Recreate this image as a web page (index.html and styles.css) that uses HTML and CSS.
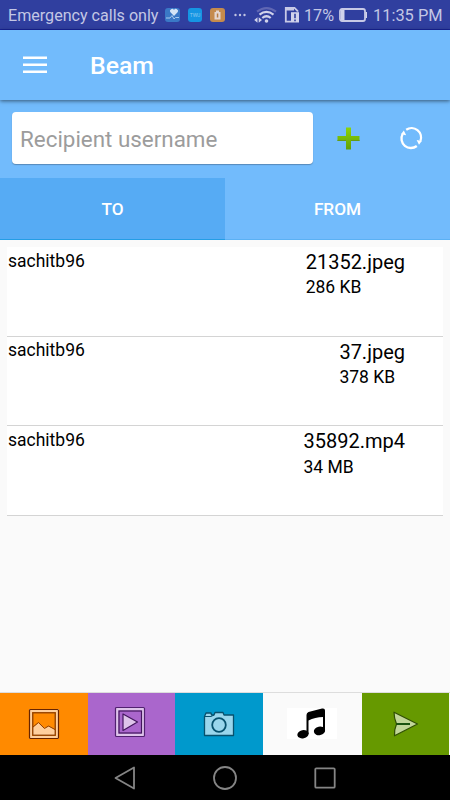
FILE: index.html
```html
<!DOCTYPE html>
<html lang="en">
<head>
<meta charset="utf-8">
<title>Beam</title>
<link rel="stylesheet" href="styles.css">
</head>
<body>
<div class="status">
  <span class="carrier">Emergency calls only</span>
  <svg class="notices" width="140" height="30" viewBox="160 0 140 30">
    <rect x="165" y="8" width="15" height="14" rx="3" fill="#3a78c6"/>
    <path d="M174 16l-3.800-3.900a2 2 0 0 1 3.800-2 2 2 0 0 1 3.800 2z" fill="#d5e5f6"/>
    <path d="M166 18h4l2-2.500 2 3.500 1.500-1.500H179" fill="none" stroke="#a6c8ed"/>
    <rect x="188" y="8" width="14" height="14" rx="3" fill="#1595e3"/>
    <text x="195" y="17" class="app-label">TWU</text>
    <rect x="210" y="8" width="15" height="14" rx="3" fill="#c58b4d"/>
    <path d="M214.500 12h6v7.500h-6zM216 10.500h3V12h-3z" fill="#e5d6cf"/>
    <path d="M216.800 13.500h1.500v4h-1.500z" fill="#b77b40"/>
    <g fill="#c1c4e2"><circle cx="235.500" cy="15" r="1.200"/><circle cx="240" cy="15" r="1.200"/><circle cx="244.500" cy="15" r="1.200"/></g>
    <g fill="none" stroke-width="2.200">
      <path d="M257 11.700q9.500-7.200 19 0" stroke="#6067b3"/>
      <path d="M259.500 14.700q7-5.500 14 0M262.300 18q4.200-3.500 8.400 0" stroke="#d0d2eb"/>
    </g>
    <circle cx="266.500" cy="21" r="1.800" fill="#d0d2eb"/>
    <path d="M254.200 20l3.300-2.700v5.400zM262 20l-3.300-2.700v5.400z" fill="#d0d2eb"/>
    <path d="M291 21.700h-5.200V7.800h8.700l3 3v1M286 9.500h8" fill="none" stroke="#c7c9e6" stroke-width="1.800"/>
    <path d="M291 12.200h8v10.300h-8z" fill="#d0d2eb"/>
    <path d="M294.200 13.800h1.600v4.400h-1.600zM294.200 19.500h1.600v1.700h-1.600z" fill="#303f9f"/>
  </svg>
  <span class="percent">17%</span>
  <svg class="battery" width="29" height="14" viewBox="0 0 29 14">
    <rect x="1" y="1" width="25" height="12" rx="2" fill="none" stroke="#c7c9e6" stroke-width="1.800"/>
    <path d="M2 2H5.500v10H2zM26.500 4H28v6h-1.500z" fill="#d0d2eb"/>
  </svg>
  <span class="clock">11:35 PM</span>
</div>
<header class="appbar">
  <svg width="24" height="18" viewBox="0 0 24 18"><path d="M0 1.700h24M0 8.700h24M0 15.700h24" stroke="#fff" stroke-width="2.500"/></svg>
  <h1>Beam</h1>
</header>
<div class="search">
  <input class="recipient" type="text" placeholder="Recipient username">
  <svg class="add" width="23" height="23" viewBox="0 0 23 23">
    <defs><linearGradient id="leaf" x2="0" y2="1"><stop stop-color="#8bd40a"/><stop offset="1" stop-color="#62a006"/></linearGradient></defs>
    <path d="M9 .5h5V9h8.500v5H14v8.500H9V14H.5V9H9z" fill="url(#leaf)"/>
    <path d="M.5 13.500H9M14 13.500h8.500" stroke="#659b16"/>
  </svg>
  <svg class="refresh" width="24" height="24" viewBox="0 0 24 24">
    <g fill="none" stroke="#fff" stroke-width="2.300">
      <path d="M7.200 3.700A9.500 9.500 0 0 1 21.400 15"/>
      <path d="M17.800 20A9.500 9.500 0 0 1 3.600 8"/>
    </g>
    <path d="M17.600 14l5.200 1-2.800 3.800zM7.200 9.200L2 8.200 4.800 4.400z" fill="#fff"/>
  </svg>
</div>
<nav class="tabs"><div class="tab active">TO</div><div class="tab">FROM</div></nav>
<main class="transfers">
  <div class="row"><span class="user">sachitb96</span><div class="file"><div class="name">21352.jpeg</div><div class="size">286 KB</div></div></div>
  <div class="row"><span class="user">sachitb96</span><div class="file"><div class="name">37.jpeg</div><div class="size">378 KB</div></div></div>
  <div class="row"><span class="user">sachitb96</span><div class="file"><div class="name">35892.mp4</div><div class="size">34 MB</div></div></div>
</main>
<footer class="actions">
  <div class="action photo">
    <svg width="32" height="32" viewBox="0 0 32 32">
      <rect x="2.500" y="2.500" width="27" height="27" fill="none" stroke="#ffcf9c" stroke-width="3"/>
      <path d="M5 19.500l5.500-4.500 5.500 5.500 5-2 6 3.500V27H5z" fill="#ffcf9c"/>
      <path d="M5 19l5.500-4.500 6 6 4-2.500L27 21.500" fill="none" stroke="#8b3f08"/>
      <rect x="4.800" y="4.800" width="22.400" height="22.400" fill="none" stroke="#843a05" stroke-width="1.200"/>
      <rect x="1.500" y="1.500" width="29" height="29" rx="1" fill="none" stroke="#682400" stroke-width="1.200"/>
    </svg>
  </div>
  <div class="action video">
    <svg width="32" height="32" viewBox="0 0 32 32">
      <rect x="3" y="3" width="26" height="26" fill="none" stroke="#dec4ea" stroke-width="3"/>
      <rect x="5" y="5" width="22.500" height="22" fill="none" stroke="#43165e" stroke-width="1.200"/>
      <rect x="1.500" y="1.500" width="29" height="29" rx="1" fill="none" stroke="#512170" stroke-width="1.200"/>
      <path d="M9 8v16.500L23.500 16z" fill="#dec4ea" stroke="#43165e" stroke-width="1.200" stroke-linejoin="round"/>
    </svg>
  </div>
  <div class="action camera">
    <svg width="32" height="26" viewBox="0 0 32 26">
      <path d="M1.500 5.500L3 2h5l.5 2H11l1-2.500h8L21 4h9.500v20.500h-29z" fill="#99d6ec" stroke="#07516d" stroke-width="1.300" stroke-linejoin="round"/>
      <path d="M2 5.500h6l3-1.500" fill="none" stroke="#07516d"/>
      <circle cx="16" cy="14" r="6.800" fill="#99d6ec" stroke="#07516d" stroke-width="1.800"/>
    </svg>
  </div>
  <div class="action music">
    <svg width="50" height="31" viewBox="0 0 50 31">
      <path d="M0 0h50v31H0z" fill="#fff"/>
      <path d="M19.500 7Q19.500 4.800 21.500 4L35 .6Q38 0 38 2.500V23h-2V9Q28 9 21.500 12.500v13.500h-2z"/>
      <ellipse cx="16" cy="26.200" rx="5.700" ry="4.100" transform="rotate(-12 16 26.200)"/>
      <ellipse cx="32.500" cy="22.900" rx="5.700" ry="4.300" transform="rotate(-12 32.500 22.900)"/>
    </svg>
  </div>
  <div class="action send">
    <svg width="26" height="26" viewBox="0 0 26 26">
      <path d="M1 1.200L24.500 13 1.500 24.800Q1 19 3.500 13 1 7 1 1.200z" fill="#c2d69a" stroke="#315004" stroke-width="1.200" stroke-linejoin="round"/>
      <path d="M3.500 13H17" stroke="#084500" stroke-width="1.800"/>
    </svg>
  </div>
</footer>
<div class="sysnav">
  <svg width="22" height="24" viewBox="0 0 22 24"><path d="M20 1.500v21L1.500 12z" fill="none" stroke="#858585" stroke-width="1.800" stroke-linejoin="round"/></svg>
  <svg width="24" height="24" viewBox="0 0 24 24"><circle cx="12" cy="12" r="11" fill="none" stroke="#858585" stroke-width="1.800"/></svg>
  <svg width="22" height="22" viewBox="0 0 22 22"><rect x="1.300" y="1.300" width="19.400" height="19.400" rx="1" fill="none" stroke="#858585" stroke-width="1.800"/></svg>
</div>
</body>
</html>
```
FILE: styles.css
```css
* { box-sizing: border-box; }
body {
  margin: 0;
  width: 450px;
  height: 800px;
  display: flex;
  flex-direction: column;
  overflow: hidden;
  background: #fafafa;
  color: #000;
  font-family: Roboto, "Liberation Sans", sans-serif;
}
svg { display: block; flex: none; }
.status {
  height: 30px;
  flex: none;
  display: flex;
  align-items: center;
  padding: 1px 0 0 8px;
  background: #303f9f;
  border-bottom: 1px solid #17249a;
  color: #c3c7e5;
  font-size: 16.1px;
  white-space: nowrap;
}
.carrier { width: 152px; }
.percent { width: 35px; padding-left: 4px; font-size: 16.2px; }
.battery { margin-left: 4px; }
.clock { margin-left: 5px; font-size: 16.4px; }
.app-label { font-size: 5px; fill: #8dcaf1; text-anchor: middle; }
.appbar {
  height: 70px;
  flex: none;
  display: flex;
  align-items: center;
  padding-left: 23px;
  gap: 43px;
  background: #72bbfc;
  box-shadow: 0 1px 4px rgba(0, 0, 0, .55);
  z-index: 1;
}
h1 { margin: 1px 0 0; color: #fff; font-size: 24.8px; font-weight: 500; }
.search {
  height: 78px;
  flex: none;
  display: flex;
  align-items: center;
  padding: 0 0 2px 12px;
  background: #72bbfc;
}
.recipient {
  width: 301px;
  height: 52px;
  padding: 2px 8px 0;
  border: 0;
  border-radius: 4px;
  background: #fff;
  box-shadow: 0 1px 1px rgba(60, 90, 120, .5);
  font: 22.4px Roboto, sans-serif;
}
.recipient::placeholder { color: #9c9c9c; opacity: 1; }
.add { margin-left: 24px; }
.refresh { margin-left: 39px; }
.tabs { height: 62px; flex: none; display: flex; background: #72bbfc; }
.tab {
  flex: 1;
  display: flex;
  align-items: center;
  justify-content: center;
  padding-top: 1px;
  border-bottom: 1px solid #5bb1f4;
  color: #fff;
  font-size: 17.2px;
  font-weight: 500;
}
.tab.active { background: #56abf4; border-color: #249de5; }
.transfers { flex: 1; padding: 7px 7px 0; }
.row {
  height: 89.600px;
  display: flex;
  justify-content: space-between;
  padding: 3px 38px 0 1px;
  background: #fff;
  border-bottom: 1px solid #d4d4d4;
}
.user, .size { font-size: 17.5px; line-height: 21px; }
.user { padding-top: .5px; }
.name { font-size: 20px; line-height: 25px; }
.size { margin-top: 2.4px; }
.actions {
  height: 63px;
  flex: none;
  display: grid;
  grid-template-columns: 88px 87px 88px 99px 87px;
  border-top: 1px solid #ddd;
}
.action { display: flex; align-items: center; justify-content: center; }
.photo { background: #ff8a00; }
.video { background: #aa66cc; padding: 0 3px 4px 0; }
.camera { background: #0099cc; padding-bottom: 1px; }
.music { padding: 0 1px 2px 0; }
.send { background: #669900; }
.sysnav {
  height: 45px;
  flex: none;
  display: flex;
  align-items: center;
  justify-content: center;
  gap: 77px;
  background: #000;
}
```
